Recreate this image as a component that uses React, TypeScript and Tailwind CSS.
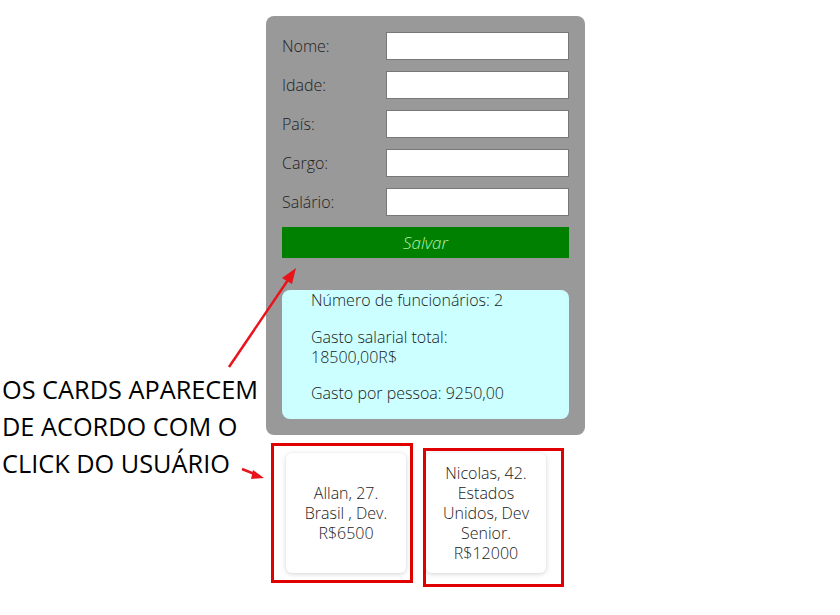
import React from 'react';

const fields = ['Nome:', 'Idade:', 'País:', 'Cargo:', 'Salário:'];

const cards = [
  { id: 1, lines: ['Allan, 27.', 'Brasil , Dev.', 'R$6500'] },
  { id: 2, lines: ['Nicolas, 42.', 'Estados', 'Unidos, Dev', 'Senior.', 'R$12000'] },
];

export default function App() {
  return (
    <div className="relative w-[840px] h-[615px] bg-white overflow-hidden font-['Open_Sans',sans-serif] text-[16px] text-[#222]">
      <div className="pl-[266px] pt-4">
        {/* Form panel */}
        <div className="w-[319px] bg-[#999999] rounded-lg px-4 pt-4 pb-4">
          <div className="flex flex-col gap-[11px]">
            {fields.map((f) => (
              <div key={f} className="flex items-center h-[28px]">
                <label className="w-[104px] font-light text-[#222]">{f}</label>
                <input className="w-[183px] h-[28px] bg-white border border-[#777]" />
              </div>
            ))}
          </div>
          <button className="mt-[11px] w-full h-[31px] bg-[#008000] text-[#b6f0b0] italic font-light text-[17px]">
            Salvar
          </button>

          {/* Summary box */}
          <div className="mt-[32px] bg-[#ccffff] rounded-lg pl-[29px] pb-4 leading-5 text-[#1a1a1a] font-light">
            <p>Número de funcionários: 2</p>
            <p className="mt-[17px]">
              Gasto salarial total:
              <br />
              18500,00R$
            </p>
            <p className="mt-[16px]">Gasto por pessoa: 9250,00</p>
          </div>
        </div>

        {/* Cards */}
        <div className="flex items-start gap-5 pl-5 pt-[18px]">
          {cards.map((c) => (
            <div
              key={c.id}
              className="w-[120px] h-[120px] bg-white rounded-md shadow-[0_1px_5px_rgba(0,0,0,0.18)] flex flex-col items-center justify-center text-center leading-5 text-[#1a1a1a] font-light"
            >
              {c.lines.map((l) => (
                <span key={l}>{l}</span>
              ))}
            </div>
          ))}
        </div>
      </div>

      {/* Annotation overlay */}
      <div className="absolute left-[2px] top-[371px] font-['Open_Sans',sans-serif] text-[25.3px] leading-[37px] text-black">
        <div>OS CARDS APARECEM</div>
        <div>DE ACORDO COM O</div>
        <div>CLICK DO USUÁRIO</div>
      </div>
      <div className="absolute left-[271px] top-[443px] w-[142px] h-[140px] border-[3px] border-[#e00000]" />
      <div className="absolute left-[423px] top-[448px] w-[141px] h-[139px] border-[3px] border-[#e00000]" />
      <svg className="absolute left-0 top-0" width="840" height="615">
        <line x1="229" y1="367" x2="290" y2="277" stroke="#e8141c" strokeWidth="2.5" />
        <polygon points="296,268 282,278 292,284" fill="#e8141c" />
        <line x1="242" y1="469" x2="257" y2="475" stroke="#e8141c" strokeWidth="2.5" />
        <polygon points="264,478 253,470 251,479" fill="#e8141c" />
      </svg>
    </div>
  );
}
